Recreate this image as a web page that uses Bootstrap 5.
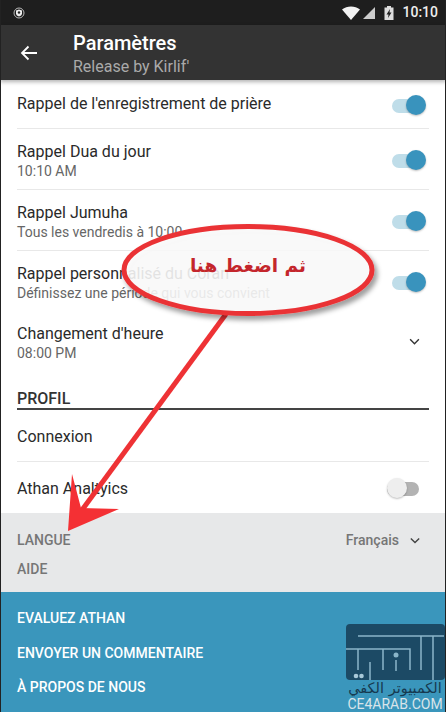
<!DOCTYPE html>
<html lang="fr">

<head>
    <meta charset="UTF-8">
    <title>Paramètres</title>
    <link href="https://cdn.jsdelivr.net/npm/bootstrap@5.3.2/dist/css/bootstrap.min.css" rel="stylesheet">
    <style>
        body { font-family: Roboto, "Liberation Sans", sans-serif; background: #fff; overflow: hidden; }
        .phone { width: 446px; height: 712px; position: relative; overflow: hidden; border-left: 1px solid #222; border-right: 1px solid #222; }
        .status-bar { height: 25px; background: #1e1e1e; color: #eee; font-size: 14px; font-weight: 500; margin: 0 -1px; padding: 0 8px 0 13px; }
        .app-bar { height: 55px; background: #333; margin: 0 -1px; padding-left: 20px; box-shadow: 0 2px 4px rgba(0,0,0,.3); position: relative; }
        .app-text { padding-top: 2px; }
        .app-title { color: #fff; font-size: 20px; font-weight: 500; line-height: 25px; }
        .app-sub { color: #aaa; font-size: 16px; line-height: 21px; }
        .back-gap { width: 35px; }
        .settings { padding: 0 16px; }
        .set-row { border-bottom: 1px solid #e8e8e8; height: 61px; padding-top: 3px; color: #2a2a2a; font-size: 16px; line-height: 20px; }
        .set-row.first { height: 49px; padding-top: 0; }
        .set-row.plain { border-bottom: 0; }
        .set-row.time { height: 62px; padding-top: 0; }
        .set-sub { color: #666; font-size: 14px; line-height: 18px; }
        .profil-head { height: 36px; border-bottom: 2px solid #444; font-size: 16px; font-weight: 500; color: #333; padding-top: 15px; line-height: 20px; }
        .row-connexion { height: 52px; padding-top: 2px; }
        .row-athan { height: 51px; padding-top: 2px; }
        .tog { width: 34px; height: 22px; position: relative; flex: none; margin: 0 3px 0 0; }
        .first .tog { margin-top: 4px; }
        .tog::before { content: ""; position: absolute; left: 0; right: 2px; top: 4px; height: 14px; border-radius: 7px; background: #bfdde9; }
        .tog::after { content: ""; position: absolute; right: 0; top: 0; width: 20px; height: 20px; border-radius: 50%; background: #3993bd; box-shadow: 0 1px 2px rgba(0,0,0,.25); }
        .tog.off { width: 32px; margin: 0 10px 0 0; }
        .tog.off::before { background: #b3b3b3; right: 0; }
        .tog.off::after { right: auto; left: 0; background: #eee; }
        .time-chevron { margin: 0 9px 4px 0; }
        .grey-block { height: 79px; background: #e7e8e9; margin: 0 -1px; padding: 17px 26px 0 17px; color: #767676; font-size: 14px; font-weight: 500; }
        .grey-line { height: 20px; line-height: 20px; }
        .aide-line { margin-top: 9px; }
        .lang-val { font-size: 14px; }
        .lang-wrap { gap: 11px; }
        .blue-block { height: 120px; background: #3a96bc; margin: 0 -1px; padding: 16px 17px 0; color: #fff; font-size: 14px; font-weight: 500; }
        .blue-line { height: 20px; line-height: 20px; margin-bottom: 14.5px; }
        .annot { position: absolute; left: -1px; top: 0; width: 446px; height: 712px; pointer-events: none; }
        .callout-text { position: absolute; left: 180px; top: 253px; width: 134px; text-align: center; color: #c4262c; font-family: "DejaVu Sans", sans-serif; font-weight: 700; font-size: 18.500px; line-height: 26px; }
        .wm { position: absolute; right: 0; top: 624px; width: 100px; text-align: center; }
        .wm-ar { color: #16394f; font-family: "DejaVu Sans", sans-serif; font-size: 14.500px; line-height: 17px; white-space: nowrap; }
        .wm-en { color: #d8e4ea; font-size: 14px; line-height: 14px; white-space: nowrap; }
    </style>
</head>

<body>
    <div class="phone">
        <!-- Status bar -->
        <div class="status-bar d-flex align-items-center justify-content-between">
            <svg width="14" height="14" viewBox="0 0 14 14">
                <circle cx="6" cy="7" r="5" fill="none" stroke="#bbb" stroke-width="1"/>
                <path d="M3 4.5 6 3.5 9 4.5V7.500C9 9 7.500 10 6 10.500 4.500 10 3 9 3 7.500Z" fill="#eee"/>
                <circle cx="6" cy="6.500" r="1.200" fill="#222"/>
            </svg>
            <div class="d-flex align-items-center">
                <svg width="20" height="14" viewBox="0 0 20 14"><path d="M0 3.500C5 -.5 13 -.5 18 3.500L9 14Z" fill="#f2f2f2"/></svg>
                <svg width="14" height="14" viewBox="0 0 14 14"><path d="M13 1V13H1Z" fill="#ccc"/></svg>
                <svg width="10" height="14" viewBox="0 0 10 14" class="ms-2 me-2"><path d="M3 0H7V1.500H9.500V14H.5V1.500H3Z" fill="#ddd"/><path d="M6 3 2.500 8.500H4.500L4 12 7.500 6.500H5.500Z" fill="#222"/></svg>
                <span>10:10</span>
            </div>
        </div>

        <!-- App bar -->
        <div class="app-bar d-flex align-items-center">
            <svg width="18" height="16" viewBox="0 0 18 16" class="back-icon">
                <path d="M17 8H2M8.500 1.500 2 8l6.500 6.500" fill="none" stroke="#fff" stroke-width="1.800"/>
            </svg>
            <div class="back-gap"></div>
            <div class="app-text">
                <div class="app-title">Paramètres</div>
                <div class="app-sub">Release by Kirlif'</div>
            </div>
        </div>

        <!-- Settings list -->
        <div class="settings">
            <div class="set-row first d-flex align-items-center justify-content-between">
                <div>Rappel de l'enregistrement de prière</div>
                <div class="tog"></div>
            </div>
            <div class="set-row d-flex align-items-center justify-content-between">
                <div>Rappel Dua du jour<div class="set-sub">10:10 AM</div></div>
                <div class="tog"></div>
            </div>
            <div class="set-row d-flex align-items-center justify-content-between">
                <div>Rappel Jumuha<div class="set-sub">Tous les vendredis à 10:00</div></div>
                <div class="tog"></div>
            </div>
            <div class="set-row plain d-flex align-items-center justify-content-between">
                <div>Rappel personnalisé du Coran<div class="set-sub">Définissez une période qui vous convient</div></div>
                <div class="tog"></div>
            </div>
            <div class="set-row plain time d-flex align-items-center justify-content-between">
                <div>Changement d'heure<div class="set-sub">08:00 PM</div></div>
                <svg width="11" height="7" viewBox="0 0 12 8" class="time-chevron"><path d="M1 1.500 6 6.500 11 1.500" fill="none" stroke="#333" stroke-width="1.600"/></svg>
            </div>
            <div class="profil-head">PROFIL</div>
            <div class="set-row row-connexion d-flex align-items-center">Connexion</div>
            <div class="set-row plain row-athan d-flex align-items-center justify-content-between">
                <div>Athan Analtyics</div>
                <div class="tog off"></div>
            </div>
        </div>

        <!-- Language / help -->
        <div class="grey-block">
            <div class="grey-line d-flex justify-content-between align-items-center">
                <span>LANGUE</span>
                <span class="d-flex align-items-center lang-wrap"><span class="lang-val">Français</span>
                    <svg width="10" height="7" viewBox="0 0 12 8"><path d="M1 1.500 6 6.500 11 1.500" fill="none" stroke="#444" stroke-width="1.700"/></svg>
                </span>
            </div>
            <div class="grey-line aide-line">AIDE</div>
        </div>

        <!-- Footer links -->
        <div class="blue-block">
            <div class="blue-line">EVALUEZ ATHAN</div>
            <div class="blue-line">ENVOYER UN COMMENTAIRE</div>
            <div class="blue-line">À PROPOS DE NOUS</div>
        </div>

        <!-- Annotation drawn over the screenshot -->
        <svg class="annot" viewBox="0 0 446 712">
            <defs>
                <filter id="soft" x="-10%" y="-20%" width="120%" height="150%">
                    <feDropShadow dx="3" dy="4" stdDeviation="2.500" flood-color="#000" flood-opacity=".4"/>
                </filter>
            </defs>
            <path d="M226 314 82 510" stroke="#ee3235" stroke-width="5" fill="none"/>
            <path d="M68 531 72 474 81 508 119 509Z" fill="#f43034"/>
            <ellipse cx="248" cy="270" rx="124" ry="43.500" fill="#fff" fill-opacity=".84" stroke="#ea3336" stroke-width="5" filter="url(#soft)"/>
        </svg>
        <div class="callout-text" dir="rtl">ثم اضغط هنا</div>

        <!-- Site watermark -->
        <div class="wm">
            <svg width="99" height="56" viewBox="0 0 99 56" class="d-block ms-auto">
                <rect x="0" y="0" width="99" height="56" rx="4" fill="#1c4a65"/>
                <path d="M12 12H98M0 25H64V46M12 25V46M24 38V56M37 25V46M50 36V47M75 12V46M87 12V56" stroke="#8ab5c9" stroke-width="1.500" fill="none"/>
                <circle cx="50" cy="31" r="2.500" fill="#8ab5c9"/>
                <circle cx="10" cy="52" r="2.300" fill="#a8c8d8"/><circle cx="15.500" cy="52" r="2.300" fill="#a8c8d8"/>
            </svg>
            <div class="wm-ar" dir="rtl">الكمبيوتر الكفي</div>
            <div class="wm-en">CE4ARAB.COM</div>
        </div>
    </div>

    <script src="https://cdn.jsdelivr.net/npm/bootstrap@5.3.2/dist/js/bootstrap.bundle.min.js"></script>
</body>

</html>
